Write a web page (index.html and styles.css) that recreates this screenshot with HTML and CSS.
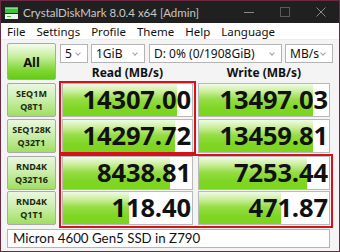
FILE: index.html
```html
<!DOCTYPE html>
<html>
<head>
<meta charset="utf-8">
<link rel="stylesheet" href="styles.css">
</head>
<body>
<div class="window">
  <div class="titlebar">
    <svg class="app-icon" width="13" height="12" viewBox="0 0 13 12">
      <rect x="0" y="0" width="13" height="6" fill="#3cc43c"/>
      <rect x="0" y="1" width="13" height="1" fill="#7fe07f"/>
      <rect x="0" y="7" width="13" height="5" fill="#f2f2f2"/>
      <rect x="2" y="9" width="4" height="1" fill="#3cc43c"/>
    </svg>
    <span class="title">CrystalDiskMark 8.0.4 x64 [Admin]</span>
    <div class="controls">
      <svg width="10" height="10" viewBox="0 0 10 10"><path d="M0 5.5H10" stroke="#8a8a8a" stroke-width="1"/></svg>
      <svg width="10" height="10" viewBox="0 0 10 10"><rect x="0.5" y="0.5" width="9" height="9" fill="none" stroke="#5a5a5a" stroke-width="1"/></svg>
      <svg width="10" height="10" viewBox="0 0 10 10"><path d="M0.5 0.5L9.5 9.5M9.5 0.5L0.5 9.5" stroke="#8a8a8a" stroke-width="1"/></svg>
    </div>
  </div>
  <div class="menubar">
    <span>File</span><span>Settings</span><span>Profile</span><span>Theme</span><span>Help</span><span>Language</span>
  </div>
  <div class="content">
    <div class="top">
      <div class="all-btn">All</div>
      <div class="top-right">
        <div class="combos">
          <div class="combo c-count"><span>5</span><i class="chev"></i></div>
          <div class="combo c-size"><span>1GiB</span><i class="chev"></i></div>
          <div class="combo c-drive"><span>D: 0% (0/1908GiB)</span><i class="chev"></i></div>
          <div class="combo c-unit"><span>MB/s</span><i class="chev"></i></div>
        </div>
        <div class="headers">
          <div class="hdr">Read (MB/s)</div>
          <div class="hdr">Write (MB/s)</div>
        </div>
      </div>
    </div>
    <div class="rows">
      <div class="label">SEQ1M<br>Q8T1</div>
      <div class="cell"><div class="bar" style="width:88%"></div><span class="val">14307.00</span></div>
      <div class="cell"><div class="bar" style="width:88%"></div><span class="val">13497.03</span></div>

      <div class="label">SEQ128K<br>Q32T1</div>
      <div class="cell"><div class="bar" style="width:87%"></div><span class="val">14297.72</span></div>
      <div class="cell"><div class="bar" style="width:88%"></div><span class="val">13459.81</span></div>

      <div class="label r3">RND4K<br>Q32T16</div>
      <div class="cell r3"><div class="bar" style="width:83%"></div><span class="val">8438.81</span></div>
      <div class="cell r3"><div class="bar" style="width:83%"></div><span class="val">7253.44</span></div>

      <div class="label">RND4K<br>Q1T1</div>
      <div class="cell"><div class="bar" style="width:51%"></div><span class="val">118.40</span></div>
      <div class="cell"><div class="bar" style="width:63%"></div><span class="val">471.87</span></div>

      <div class="hl hl-seq"></div>
      <div class="hl hl-rnd"></div>
    </div>
    <div class="comment">Micron 4600 Gen5 SSD in Z790</div>
  </div>
</div>
</body>
</html>
```
FILE: styles.css
```css
* { box-sizing: border-box; }
html, body { margin: 0; padding: 0; }
body {
  width: 340px;
  height: 252px;
  overflow: hidden;
  font-family: "Noto Sans", "Open Sans", sans-serif;
}
.window {
  width: 340px;
  height: 252px;
  border: 1px solid #6b2a42;
  background: #f4f4f4;
  display: flex;
  flex-direction: column;
}
.titlebar {
  height: 22px;
  background: #202020;
  display: flex;
  align-items: center;
  padding-left: 4px;
  flex-shrink: 0;
}
.app-icon { margin-right: 5px; margin-top: 1px; }
.title {
  font-family: Lato, "Noto Sans", sans-serif;
  color: #c8c8c8;
  font-size: 11.5px;
}
.controls {
  margin-left: auto;
  display: flex;
  gap: 26px;
  padding-right: 13px;
  align-items: center;
}
.menubar {
  height: 17px;
  background: #ffffff;
  display: flex;
  align-items: center;
  padding-left: 6px;
  gap: 11px;
  font-size: 11.5px;
  color: #111;
  flex-shrink: 0;
  border-bottom: 1px solid #ececec;
}
.content {
  flex: 1;
  padding: 3px 0 0 6px;
  position: relative;
}
.top {
  display: flex;
  gap: 4px;
}
.all-btn {
  width: 49px;
  height: 37px;
  border: 1px solid #a9a9a9;
  border-radius: 2px;
  background: linear-gradient(to bottom, #f4fcee 0%, #c9ef9f 35%, #7fd635 75%, #64cc12 100%);
  font-weight: bold;
  font-size: 13px;
  display: flex;
  align-items: center;
  justify-content: center;
  color: #111;
}
.top-right { display: flex; flex-direction: column; }
.combos {
  display: flex;
  margin-top: 1px;
  height: 19px;
}
.combo {
  height: 19px;
  background: #fff;
  border: 1px solid #b4b4b4;
  display: flex;
  align-items: center;
  padding-left: 4px;
  font-size: 12px;
  color: #111;
  position: relative;
}
.combo span { line-height: 1; }
.chev {
  position: absolute;
  right: 7px;
  top: 6px;
  width: 4px;
  height: 4px;
  border-right: 1px solid #a0a0a0;
  border-bottom: 1px solid #a0a0a0;
  transform: rotate(45deg);
}
.c-count { width: 28px; }
.c-size { width: 54px; margin-left: 3px; }
.c-drive { width: 133px; margin-left: 4px; }
.c-unit { width: 48px; margin-left: 3px; }
.headers {
  display: grid;
  grid-template-columns: 131px 132px;
  column-gap: 5px;
  margin-left: 2px;
  height: 18px;
  align-items: center;
}
.hdr {
  text-align: center;
  font-weight: bold;
  font-size: 12px;
  color: #111;
  padding-top: 1px;
}
.rows {
  position: relative;
  margin-top: 2px;
  display: grid;
  grid-template-columns: 50px 131px 132px;
  grid-auto-rows: 34px;
  column-gap: 5px;
  row-gap: 2px;
}
.label {
  width: 49px;
  border: 1px solid #a9a9a9;
  border-radius: 2px;
  background: linear-gradient(to bottom, #eaf8e0 0%, #cdeeae 45%, #a0df62 100%);
  font-weight: bold;
  font-size: 9px;
  line-height: 13px;
  text-align: center;
  display: flex;
  align-items: center;
  justify-content: center;
  color: #1b2a10;
}
.r3 { margin-top: 1px; margin-bottom: -1px; }
.cell {
  position: relative;
  background: #fff;
  border: 1px solid #b9b9b9;
  display: flex;
  align-items: center;
  justify-content: flex-end;
  overflow: hidden;
}
.bar {
  position: absolute;
  left: 0; top: 0; bottom: 0;
  background: linear-gradient(to bottom, #f0fbe8 0%, #cdef9f 22%, #95dd45 48%, #7fd624 75%, #7bd51c 100%);
}
.val {
  position: relative;
  font-family: "Open Sans", "Noto Sans", sans-serif;
  font-weight: bold;
  font-size: 25.5px;
  line-height: 1;
  color: #111;
  padding-right: 1px;
  letter-spacing: -0.1px;
}
.hl {
  position: absolute;
  border: 2px solid #d4121b;
  pointer-events: none;
}
.hl-seq { left: 52px; top: -2px; width: 137px; height: 73px; }
.hl-rnd { left: 52px; top: 71px; width: 274px; height: 74px; }
.comment {
  margin-top: 4px;
  width: 323px;
  height: 19px;
  background: #fff;
  border: 1px solid #b4b4b4;
  font-family: Lato, "Noto Sans", sans-serif;
  font-size: 13.3px;
  line-height: 17px;
  padding-left: 5px;
  color: #111;
}
```
